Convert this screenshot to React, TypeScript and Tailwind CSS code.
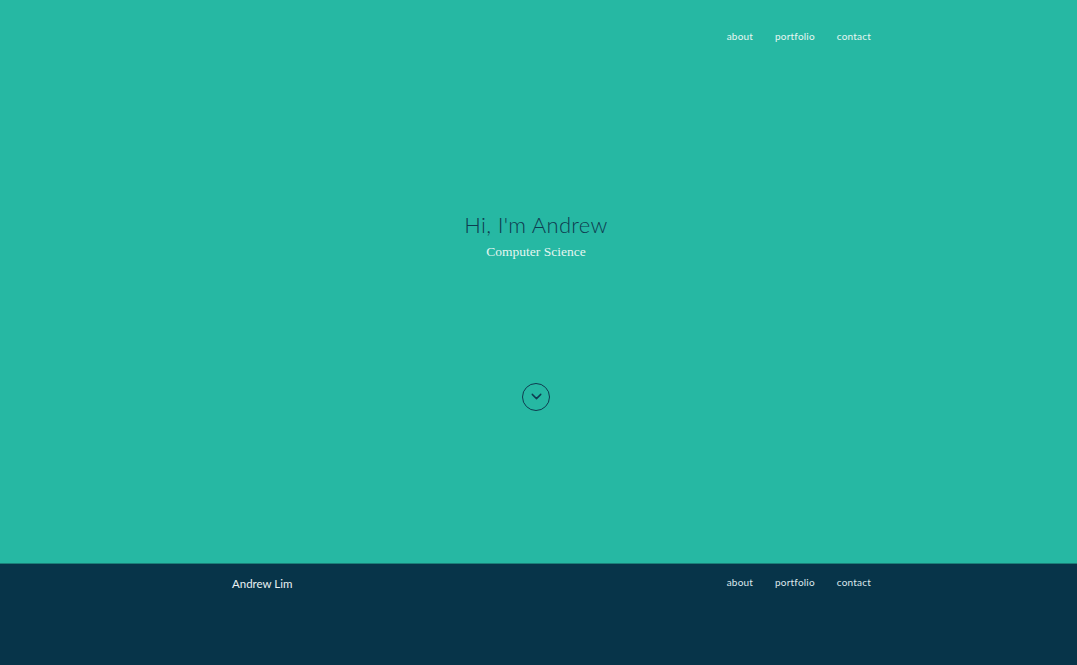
import { ChevronDown } from 'lucide-react';

const links = ['about', 'portfolio', 'contact'];

function NavLinks({ color }: { color: string }) {
  return (
    <nav className={`flex gap-[22px] text-[10px] tracking-[0.2px] ${color}`}>
      {links.map((l) => (
        <a key={l} href="#" className="leading-none">
          {l}
        </a>
      ))}
    </nav>
  );
}

export default function App() {
  return (
    <div className="w-full min-h-screen bg-[#073449] font-['Lato',sans-serif]">
      {/* Hero */}
      <section className="h-[563px] bg-[#26b8a3] flex flex-col">
        <header className="flex justify-end pt-[31px] pr-[206px]">
          <NavLinks color="text-[#e6f7f2]" />
        </header>
        <div className="flex flex-col items-center mt-[173px] pr-[5px]">
          <h1 className="text-[22px] font-light text-[#0f3b50] leading-none tracking-[0.3px]">Hi, I'm Andrew</h1>
          <p className="mt-[9px] text-[13.5px] text-[#e4f6f1] font-['Liberation_Serif',serif] leading-none">
            Computer Science
          </p>
          <button className="mt-[124px] h-[28px] w-[28px] rounded-full border-[1.6px] border-[#0f3b50] flex items-center justify-center text-[#0f3b50]">
            <ChevronDown size={17} strokeWidth={2} />
          </button>
        </div>
      </section>
      <div className="h-px bg-[#1b7f78]" />

      {/* Footer */}
      <footer className="h-[101px] flex items-start justify-between pt-[14px] pl-[232px] pr-[206px]">
        <span className="text-[11.5px] text-[#e9f1f3] leading-none">Andrew Lim</span>
        <div className="-mt-[1px]">
          <NavLinks color="text-[#dde8ec]" />
        </div>
      </footer>
    </div>
  );
}
